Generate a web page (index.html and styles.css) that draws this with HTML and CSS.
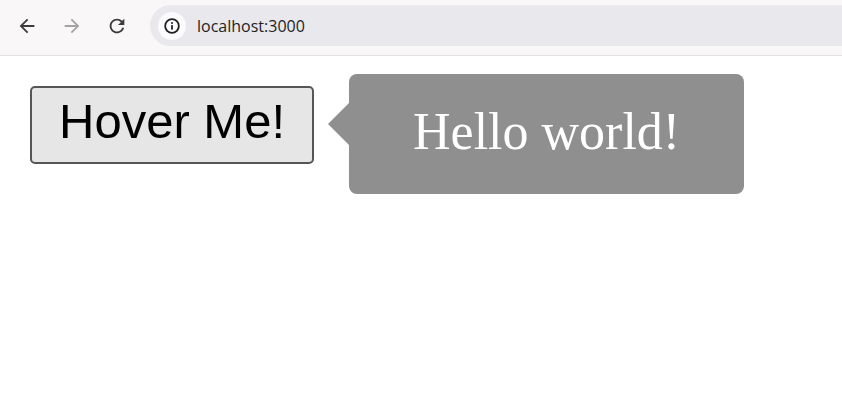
FILE: index.html
```html
<!DOCTYPE html>
<html lang="en">
<head>
<meta charset="utf-8">
<title>localhost:3000</title>
<link rel="stylesheet" href="styles.css">
</head>
<body>
<header class="toolbar">
  <nav class="nav">
    <span class="nav-btn">
      <svg viewBox="0 0 24 24" width="22" height="22"><path d="M20 11H7.83l5.59-5.59L12 4l-8 8 8 8 1.41-1.41L7.83 13H20v-2z"/></svg>
    </span>
    <span class="nav-btn nav-btn--off">
      <svg viewBox="0 0 24 24" width="22" height="22"><path d="M4 11h12.17l-5.59-5.59L12 4l8 8-8 8-1.41-1.41L16.17 13H4v-2z"/></svg>
    </span>
    <span class="nav-btn">
      <svg viewBox="0 0 24 24" width="22" height="22"><path d="M17.65 6.35C16.2 4.9 14.21 4 12 4c-4.42 0-7.99 3.58-7.99 8s3.57 8 7.99 8c3.730 0 6.84-2.550 7.73-6h-2.08c-.82 2.33-3.04 4-5.65 4-3.31 0-6-2.69-6-6s2.69-6 6-6c1.66 0 3.14.69 4.22 1.78L13 11h7V4l-2.35 2.35z"/></svg>
    </span>
  </nav>
  <div class="omnibox">
    <span class="site-info">
      <svg viewBox="0 0 20 20" width="18" height="18"><circle cx="10" cy="10" r="7.6" fill="none" stroke="#1f1f1f" stroke-width="2"/><rect x="9" y="9" width="2" height="5" fill="#1f1f1f"/><circle cx="10" cy="6.6" r="1.15" fill="#1f1f1f"/></svg>
    </span>
    <span class="url">localhost:3000</span>
  </div>
</header>
<main class="page">
  <div class="hover-wrap">
    <button class="hover-btn" type="button">Hover Me!</button>
    <div class="tooltip">Hello world!</div>
  </div>
</main>
</body>
</html>
```

FILE: styles.css
```css
html, body {
  margin: 0;
  padding: 0;
  background: #ffffff;
}

.toolbar {
  display: flex;
  align-items: flex-start;
  box-sizing: border-box;
  height: 56px;
  padding: 5px 0 0 9px;
  background: #f9f7f8;
  border-bottom: 1px solid #e2e0e1;
}

.nav {
  display: flex;
  align-items: center;
  gap: 9px;
  height: 42px;
}

.nav-btn {
  display: flex;
  align-items: center;
  justify-content: center;
  width: 36px;
  height: 36px;
  fill: #3b3b3d;
}

.nav-btn--off {
  fill: #a3a2a4;
}

.omnibox {
  flex: 1;
  display: flex;
  align-items: center;
  gap: 11px;
  height: 41px;
  margin-left: 15px;
  padding-left: 8px;
  background: #e8e8ed;
  border-radius: 21px 0 0 21px;
}

.site-info {
  display: flex;
  align-items: center;
  justify-content: center;
  width: 28px;
  height: 28px;
  border-radius: 50%;
  background: #fbfbfd;
}

.url {
  font-family: "Open Sans", "Noto Sans", sans-serif;
  font-size: 16px;
  color: #1f1f1f;
}

.page {
  padding: 30px;
}

.hover-wrap {
  position: relative;
  display: inline-block;
}

.hover-btn {
  display: block;
  margin: 0;
  padding: 6px 27px 13px;
  font-family: "Liberation Sans", Arial, sans-serif;
  font-size: 49px;
  line-height: 55px;
  color: #000000;
  background: #e6e6e6;
  border: 2px solid #565656;
  border-radius: 5px;
}

.tooltip {
  position: absolute;
  left: 319px;
  top: -12px;
  padding: 28px 64px 32px;
  white-space: nowrap;
  font-family: "Liberation Serif", "Times New Roman", serif;
  font-size: 52px;
  line-height: 60px;
  color: #ffffff;
  background: #8f8f8f;
  border-radius: 8px;
}

.tooltip::before {
  content: "";
  position: absolute;
  right: 100%;
  top: 29px;
  border-style: solid;
  border-color: transparent #8f8f8f transparent transparent;
  border-width: 21px 21px 21px 0;
}
```
